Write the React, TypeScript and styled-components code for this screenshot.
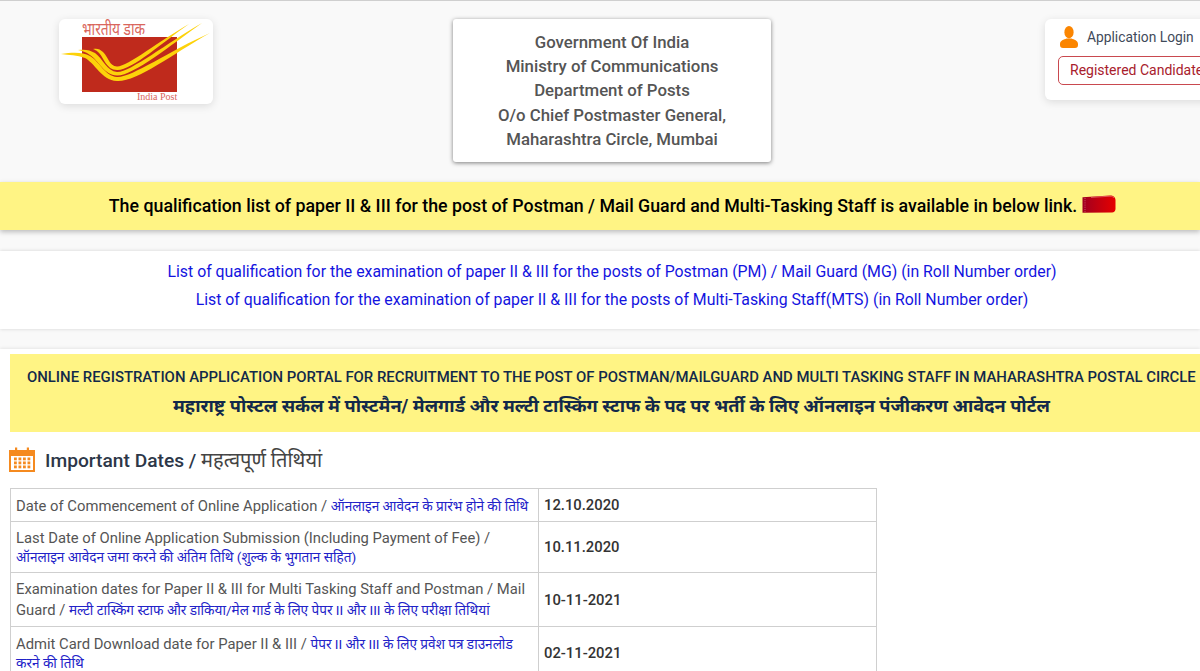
import styled, { createGlobalStyle } from "styled-components";

const GlobalStyle = createGlobalStyle`
  html, body {
    margin: 0;
    height: 671px;
    overflow: hidden;
    background: #f9f9f9;
    font-family: Roboto, "Noto Sans", "Noto Sans Devanagari", "Liberation Sans", sans-serif;
  }
`;

const Page = styled.div`
  width: 1200px;
  height: 670px;
  overflow: hidden;
  border-top: 1px solid #cfcfcf;
`;
const Header = styled.header`
  display: flex;
  align-items: flex-start;
  box-sizing: border-box;
  height: 181px;
  padding: 18px 0 0 59px;
`;
const LogoCard = styled.div`
  flex: none;
  width: 154px;
  height: 85px;
  background: #fff;
  border-radius: 6px;
  box-shadow: 0 2px 8px rgba(0, 0, 0, 0.12);
`;
const TitleCard = styled.div`
  flex: none;
  box-sizing: border-box;
  width: 318px;
  height: 143px;
  margin-left: 240px;
  padding: 11px 0;
  background: #fff;
  border-radius: 3px;
  box-shadow: 0 1px 4px rgba(0, 0, 0, 0.5);
  color: #555;
  font-size: 16.8px;
  font-weight: 500;
  line-height: 24.2px;
  text-align: center;
`;
const LoginCard = styled.div`
  flex: none;
  box-sizing: border-box;
  width: 180px;
  height: 81px;
  margin-left: 274px;
  padding: 6px 13px;
  background: #fff;
  border-radius: 6px;
  box-shadow: 0 2px 8px rgba(0, 0, 0, 0.12);
`;
const LoginTitle = styled.div`
  display: flex;
  align-items: center;
  gap: 9px;
  height: 24px;
  padding-left: 2px;
  color: #3f4a5a;
  font-size: 13.8px;
  white-space: nowrap;
`;
const CandidateButton = styled.div`
  box-sizing: border-box;
  width: 170px;
  height: 29px;
  margin-top: 7px;
  padding-left: 11px;
  border: 1px solid #c9494f;
  border-radius: 5px;
  color: #a8202c;
  font-size: 14px;
  line-height: 26px;
  white-space: nowrap;
`;
const Notice = styled.div`
  display: flex;
  align-items: center;
  justify-content: center;
  gap: 5px;
  box-sizing: border-box;
  height: 48px;
  padding: 0 0 2px 25px;
  background: #fff484;
  box-shadow: 0 2px 5px rgba(0, 0, 0, 0.25);
  color: #000;
  font-size: 17.8px;
  font-weight: 500;
`;
const LinkStrip = styled.div`
  box-sizing: border-box;
  height: 78px;
  margin-top: 21px;
  padding: 7px 0 0 24px;
  background: #fff;
  box-shadow: 0 -1px 3px rgba(0, 0, 0, 0.08), 0 1px 3px rgba(0, 0, 0, 0.08);
  text-align: center;
`;
const ListLink = styled.a`
  display: block;
  color: #1414e0;
  font-size: 15.85px;
  line-height: 28px;
`;
const Content = styled.main`
  height: 330px;
  margin-top: 20px;
  padding-top: 5px;
  background: #fff;
  box-shadow: 0 -1px 3px rgba(0, 0, 0, 0.08);
`;
const Portal = styled.div`
  box-sizing: border-box;
  width: 1220px;
  height: 78px;
  margin-left: 10px;
  padding-top: 13px;
  background: #fff484;
  color: #12294a;
  white-space: nowrap;
`;
const PortalEnglish = styled.div`
  padding-left: 17px;
  font-size: 14.9px;
  font-weight: 500;
  line-height: 20px;
`;
const PortalHindi = styled.div`
  padding-left: 163px;
  margin-top: 4px;
  font-size: 18.2px;
  font-weight: 700;
  line-height: 30px;
`;
const SectionHeading = styled.h2`
  display: flex;
  align-items: center;
  gap: 10px;
  height: 54px;
  margin: 0 0 2px 9px;
  color: #2d3748;
  font-size: 19.2px;
  font-weight: 500;
`;
const HeadingHindi = styled.span`
  color: #444;
  font-size: 20px;
  font-weight: 400;
`;
const DatesTable = styled.table`
  width: 867px;
  margin-left: 10px;
  border-collapse: collapse;
  table-layout: fixed;
  background: #fff;
  font-size: 14.8px;
`;
const LabelCell = styled.td<{ $wide?: boolean }>`
  width: 528px;
  box-sizing: border-box;
  padding: ${({ $wide }) => ($wide ? "5.5px 5px" : "6.5px 5px")};
  border: 1px solid #cfcfcf;
  color: #555;
  line-height: ${({ $wide }) => ($wide ? "21px" : "normal")};
`;
const DateCell = styled.td`
  padding: 6px 5px;
  border: 1px solid #cfcfcf;
  color: #333;
  font-weight: 500;
`;
const Hindi = styled.span`
  color: #2222c8;
  font-size: 13.6px;
`;
const RibbonMark = styled.svg`
  flex: none;
  margin-top: -1px;
`;

const rows = [
  {
    en: "Date of Commencement of Online Application / ",
    hi: "ऑनलाइन आवेदन के प्रारंभ होने की तिथि",
    date: "12.10.2020",
  },
  {
    en: "Last Date of Online Application Submission (Including Payment of Fee) / ",
    hi: "ऑनलाइन आवेदन जमा करने की अंतिम तिथि (शुल्क के भुगतान सहित)",
    date: "10.11.2020",
  },
  {
    en: "Examination dates for Paper II & III for Multi Tasking Staff and Postman / Mail Guard / ",
    hi: "मल्टी टास्किंग स्टाफ और डाकिया/मेल गार्ड के लिए पेपर II और III के लिए परीक्षा तिथियां",
    date: "10-11-2021",
    wide: true,
  },
  {
    en: "Admit Card Download date for Paper II & III / ",
    hi: "पेपर II और III के लिए प्रवेश पत्र डाउनलोड करने की तिथि",
    date: "02-11-2021",
  },
];

const IndiaPostLogo = () => (
  <svg width="154" height="85" viewBox="0 0 154 85">
    <rect x="23" y="18" width="95" height="55" fill="#bf2a1c" />
    <text
      x="23"
      y="16"
      fill="#d9665c"
      fontSize="17"
      fontFamily="'Noto Sans', sans-serif"
      textLength="63"
      lengthAdjust="spacingAndGlyphs"
    >
      भारतीय डाक
    </text>
    <text x="78" y="81" fill="#d9665c" fontSize="10" fontFamily="'Liberation Serif', serif">
      India Post
    </text>
    <g fill="#fdd20a">
      <path d="M2 35 C14 33 24 33 31 37 C41 43 46 57 58 58 C72 59 110 32 151 14 C112 36 78 63 58 62 C42 61 36 44 26 39 C18 36 10 36 2 35Z" />
      <path d="M19 31 C26 30 31 31 36 34 C44 40 48 52 58 53 C70 54 108 24 143 4 C112 26 74 57 58 56.5 C45 56 40 42 31 36 C27 33 23 32 19 31Z" />
      <path d="M34 30 C38 29 41 30 44 33 C50 39 50 47 58 47.5 C68 48 100 22 130 5 C104 23 72 52 58 51 C47 51 45 38 39 33 C37 31 36 31 34 30Z" />
    </g>
  </svg>
);

const UserIcon = () => (
  <svg width="18" height="22" viewBox="0 0 18 22">
    <ellipse cx="9" cy="6.2" rx="4.6" ry="6.2" fill="#fb8500" />
    <path
      d="M0 19 V18 C0 14.5 4 13.5 6.5 12.5 H11.5 C14 13.5 18 14.5 18 18 V19 C18 21 17 22 15 22 H3 C1 22 0 21 0 19 Z"
      fill="#fb8500"
    />
  </svg>
);

const NewRibbon = () => (
  <RibbonMark width="34" height="19" viewBox="0 0 34 19">
    <defs>
      <linearGradient id="ribbon" x1="0" x2="1" y1="0" y2="0">
        <stop offset="0" stopColor="#a00020" />
        <stop offset="0.5" stopColor="#c4000f" />
        <stop offset="1" stopColor="#e60000" />
      </linearGradient>
    </defs>
    <path
      d="M0.5 2.2 L28 0.4 C31.5 0.4 33.5 2.5 33.5 5 V14 C33.5 16 32 17.4 30 17.4 L0.5 17.8 Z"
      fill="url(#ribbon)"
    />
    <path d="M9 2.4 L28 1.2 C30 1.2 31 1.8 32 3" stroke="#e86a6a" strokeWidth="0.8" fill="none" />
    <path d="M3 3 V17" stroke="#e58a9a" strokeWidth="0.6" strokeDasharray="1 1.2" />
  </RibbonMark>
);

const CalendarIcon = () => (
  <svg width="26" height="25" viewBox="0 0 26 25">
    <rect x="1" y="4" width="24" height="20" fill="none" stroke="#f58a1f" strokeWidth="2" />
    <rect x="1" y="4" width="24" height="5" fill="#f58a1f" />
    <rect x="6" y="0.5" width="2.2" height="6" fill="#f58a1f" />
    <rect x="17.8" y="0.5" width="2.2" height="6" fill="#f58a1f" />
    {[10.5, 14.5, 18.5].map((y) =>
      [5, 9.5, 14, 18.5].map((x) => (
        <rect key={`${x}-${y}`} x={x} y={y} width="2.8" height="2.8" fill="#f58a1f" />
      ))
    )}
  </svg>
);

const App = () => {
  return (
    <Page>
      <GlobalStyle />
      <Header>
        <LogoCard>
          <IndiaPostLogo />
        </LogoCard>
        <TitleCard>
          Government Of India
          <br />
          Ministry of Communications
          <br />
          Department of Posts
          <br />
          O/o Chief Postmaster General,
          <br />
          Maharashtra Circle, Mumbai
        </TitleCard>
        <LoginCard>
          <LoginTitle>
            <UserIcon />
            Application Login
          </LoginTitle>
          <CandidateButton>Registered Candidate</CandidateButton>
        </LoginCard>
      </Header>
      <Notice>
        The qualification list of paper II &amp; III for the post of Postman / Mail Guard and
        Multi-Tasking Staff is available in below link.
        <NewRibbon />
      </Notice>
      <LinkStrip>
        <ListLink>
          List of qualification for the examination of paper II &amp; III for the posts of Postman
          (PM) / Mail Guard (MG) (in Roll Number order)
        </ListLink>
        <ListLink>
          List of qualification for the examination of paper II &amp; III for the posts of
          Multi-Tasking Staff(MTS) (in Roll Number order)
        </ListLink>
      </LinkStrip>
      <Content>
        <Portal>
          <PortalEnglish>
            ONLINE REGISTRATION APPLICATION PORTAL FOR RECRUITMENT TO THE POST OF POSTMAN/MAILGUARD
            AND MULTI TASKING STAFF IN MAHARASHTRA POSTAL CIRCLE
          </PortalEnglish>
          <PortalHindi>
            महाराष्ट्र पोस्टल सर्कल में पोस्टमैन/ मेलगार्ड और मल्टी टास्किंग स्टाफ के पद पर भर्ती के लिए ऑनलाइन
            पंजीकरण आवेदन पोर्टल
          </PortalHindi>
        </Portal>
        <SectionHeading>
          <CalendarIcon />
          <span>
            Important Dates / <HeadingHindi>महत्वपूर्ण तिथियां</HeadingHindi>
          </span>
        </SectionHeading>
        <DatesTable>
          <tbody>
            {rows.map((row) => (
              <tr key={row.date}>
                <LabelCell $wide={row.wide}>
                  {row.en}
                  <Hindi>{row.hi}</Hindi>
                </LabelCell>
                <DateCell>{row.date}</DateCell>
              </tr>
            ))}
          </tbody>
        </DatesTable>
      </Content>
    </Page>
  );
};

export default App;
